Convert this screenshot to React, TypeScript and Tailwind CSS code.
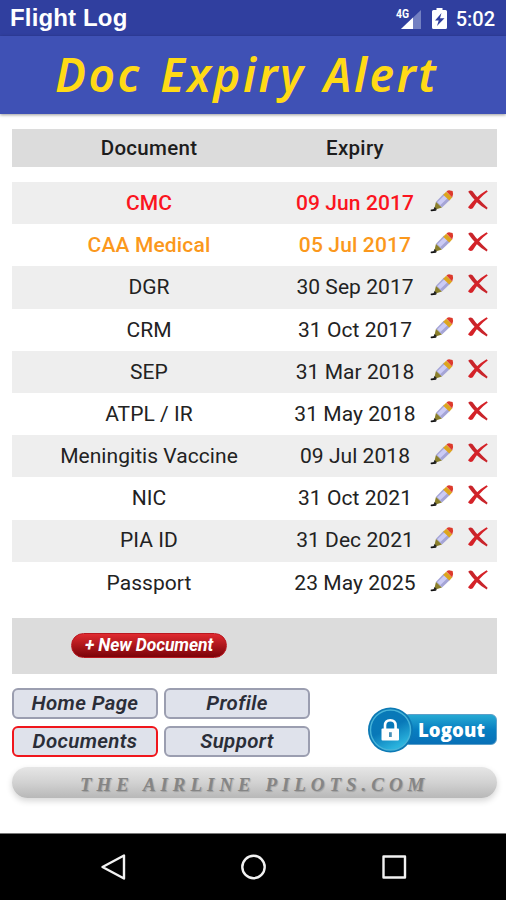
import React from "react";

type Doc = { name: string; date: string; tone?: string };

const plain = "text-[#222] tracking-[0.05px]";
const docs: Doc[] = [
  { name: "CMC", date: "09 Jun 2017", tone: "font-medium text-[#fb1420] tracking-[0.1px]" },
  { name: "CAA Medical", date: "05 Jul 2017", tone: "font-medium text-[#fb981c] tracking-[0.15px]" },
  { name: "DGR", date: "30 Sep 2017" },
  { name: "CRM", date: "31 Oct 2017" },
  { name: "SEP", date: "31 Mar 2018" },
  { name: "ATPL / IR", date: "31 May 2018" },
  { name: "Meningitis Vaccine", date: "09 Jul 2018" },
  { name: "NIC", date: "31 Oct 2021" },
  { name: "PIA ID", date: "31 Dec 2021" },
  { name: "Passport", date: "23 May 2025" },
];

function Pencil() {
  return (
    <svg width="24" height="22" viewBox="0 0 24 22" className="shrink-0">
      <path d="M1.5 20.4L5.5 19.9" stroke="#111" strokeWidth="1.8" strokeLinecap="round" />
      <path d="M4 20L6 11.8L12 17.4Z" fill="#8a7f2c" />
      <path d="M3 20.6L4.6 17L7 19.3Z" fill="#222" />
      <path d="M6 11.8L14 3.6L20.4 9.6L12 17.4Z" fill="#a5a5d6" />
      <path d="M7.4 12.2L15 4.8L18 7.8L10.4 15Z" fill="#cbcbf5" />
      <path d="M13.2 4.7L16.2 1.7L22.2 7.4L19.3 10.5Z" fill="#dda51e" />
      <path d="M16.4 1.6Q18.3 0 20 .4L22.6 1Q24 4.6 22.2 7.4Z" fill="#dd3a2c" />
    </svg>
  );
}

function Cross() {
  return (
    <svg width="20" height="20" viewBox="0 0 20 20" className="shrink-0">
      <path d="M.2 1.7Q2.3-.6 4.6 1.2Q9.7 8.6 19.6 17.8L18.8 19.6Q8.3 13.8 .2 1.7Z" fill="#c9252b" />
      <path d="M18.6 .2L19.8 1.6Q11.6 7.4 4.8 18.2Q2.2 20.2 0 17.3Q8 6.4 18.6 .2Z" fill="#d52228" />
    </svg>
  );
}

function NavButton({ label, active }: { label: string; active?: boolean }) {
  return (
    <button
      className={`flex h-[31px] w-[146px] items-center justify-center rounded-[6px] border-2 bg-[#dfe2eb] text-[20.5px] font-semibold italic leading-none tracking-[0.35px] text-[#2b2e38] ${active ? "border-[#f0161c]" : "border-[#9b9eb0]"}`}
    >
      {label}
    </button>
  );
}

export default function App() {
  return (
    <div className="flex h-[900px] w-[506px] flex-col overflow-hidden bg-white font-['Roboto',sans-serif]">
      <header className="shrink-0 text-white">
        <div className="flex h-[36px] items-center bg-[#303f9f] pl-[10px] pr-[11px]">
          <span className="font-['Liberation_Sans',Arial,sans-serif] text-[24px] font-bold leading-none tracking-[0.15px]">Flight Log</span>
          <svg className="ml-auto" width="29" height="23" viewBox="0 0 29 23">
            <path d="M27 3V22H7Z" fill="#7380c2" />
            <path d="M19 10.5V22H7Z" fill="#fff" />
            <text x="2" y="11" fontFamily="Roboto" fontSize="12" fontWeight="700" fill="#fff" textLength="13" lengthAdjust="spacingAndGlyphs">4G</text>
          </svg>
          <svg className="ml-[9px]" width="15" height="21" viewBox="0 0 15 21">
            <path d="M4.5 0H10.5V2H13.5Q15 2 15 3.5V19.5Q15 21 13.5 21H1.5Q0 21 0 19.5V3.5Q0 2 1.5 2H4.5Z" fill="#fff" />
            <path d="M9.5 5L3 12.5H6.7L5 18L12.5 10.3H8Z" fill="#303f9f" />
          </svg>
          <span className="ml-[9px] pt-[2px] text-[20px] font-medium leading-none">5:02</span>
        </div>
        <div className="flex h-[78px] items-center bg-[#3f51b5] pb-[2px] pl-[55px] shadow-[0_1px_3px_rgba(0,0,0,0.4)]">
          <h1 className="whitespace-nowrap font-['Noto_Sans',sans-serif] text-[46px] font-semibold italic leading-none tracking-[2.5px] [word-spacing:4px] text-[#ffda16]">Doc Expiry Alert</h1>
        </div>
      </header>

      <main className="flex w-[497px] flex-1 flex-col pl-3 pt-[15px]">
        <div className="grid h-[38px] shrink-0 grid-cols-[274px_138px_73px] items-center bg-[#dcdcdc] text-center text-[20.5px] font-medium leading-none tracking-[0.3px] text-[#1d1d1d]">
          <span>Document</span>
          <span>Expiry</span>
        </div>

        <div className="mt-[15px] shrink-0">
          {docs.map((d) => (
            <div key={d.name} className="grid h-[42.2px] grid-cols-[274px_138px_73px] items-center pt-[0.8px] text-center text-[21px] leading-none odd:bg-[#eee]">
              <span className={d.tone ?? plain}>{d.name}</span>
              <span className={`whitespace-nowrap ${d.tone ?? plain}`}>{d.date}</span>
              <span className="flex gap-[14px] pb-[5px] pl-[6px]">
                <Pencil />
                <Cross />
              </span>
            </div>
          ))}
        </div>

        <div className="mt-[14px] flex h-[56px] shrink-0 items-center bg-[#dcdcdc] pl-[59px]">
          <button className="flex h-[25px] w-[156px] items-center justify-center whitespace-nowrap rounded-full border border-[#b91820] bg-gradient-to-b from-[#e02a30] to-[#7c0308] text-[17.5px] font-bold italic leading-none tracking-[-0.1px] text-white">
            + New Document
          </button>
        </div>

        <div className="mt-[14px] flex shrink-0 justify-between">
          <nav className="grid grid-cols-[146px_146px] gap-x-[6px] gap-y-[7px]">
            <NavButton label="Home Page" />
            <NavButton label="Profile" />
            <NavButton label="Documents" active />
            <NavButton label="Support" />
          </nav>
          <button className="mt-[19px] flex h-[46px] items-center">
            <svg className="z-10" width="46" height="46" viewBox="0 0 46 46">
              <defs>
                <linearGradient id="disc" x1="0" y1="0" x2="0.5" y2="1">
                  <stop offset="0" stopColor="#087ab8" />
                  <stop offset=".55" stopColor="#0878b8" />
                  <stop offset="1" stopColor="#2bb4de" />
                </linearGradient>
              </defs>
              <circle cx="22.5" cy="23" r="22.5" fill="#0c79b4" />
              <circle cx="22.5" cy="23" r="20" fill="url(#disc)" stroke="#47b4d9" strokeWidth="1.4" />
              <path d="M17 23V18.5Q17 13.2 22.3 13.2T27.6 18.5V23" fill="none" stroke="#fff" strokeWidth="2.6" />
              <rect x="13.5" y="21.5" width="17.5" height="12" rx="1" fill="#fff" />
              <path d="M21 25.2h2.8v4.8h-2.8z" fill="#4a91b8" />
            </svg>
            <span className="-ml-[11px] flex h-[31px] w-[94px] items-center rounded-[6px] border border-[#5b9fc9] bg-gradient-to-b from-[#25a9d3] via-[#087fc1] to-[#0870b7] pl-[14px] font-['Open_Sans',sans-serif] text-[18.5px] font-extrabold leading-none tracking-[0.1px] text-white">
              Logout
            </span>
          </button>
        </div>

        <footer className="mt-[10px] flex h-[31px] shrink-0 items-center rounded-full bg-gradient-to-b from-[#e6e6e6] via-[#d2d2d2] to-[#b8b8b8] pl-[68px] shadow-[0_3px_6px_rgba(0,0,0,0.16)]">
          <span className="whitespace-nowrap pt-[4px] font-['Liberation_Serif',serif] text-[19px] font-bold italic leading-none tracking-[4.95px] text-[#858585] [text-shadow:1px_1px_1px_rgba(0,0,0,0.18)]">
            THE AIRLINE PILOTS.COM
          </span>
        </footer>
      </main>

      <div className="flex h-[67px] shrink-0 items-center border-t border-[#777] bg-black pl-[101px]">
        <svg width="306" height="26" viewBox="0 0 306 26" fill="none" stroke="#f2f2f2" strokeWidth="2.4" strokeLinejoin="round">
          <path d="M1.5 13L23 1.5V24.5Z" />
          <circle cx="152.5" cy="13" r="11.2" />
          <rect x="282.5" y="2.5" width="21.5" height="21" />
        </svg>
      </div>
    </div>
  );
}
